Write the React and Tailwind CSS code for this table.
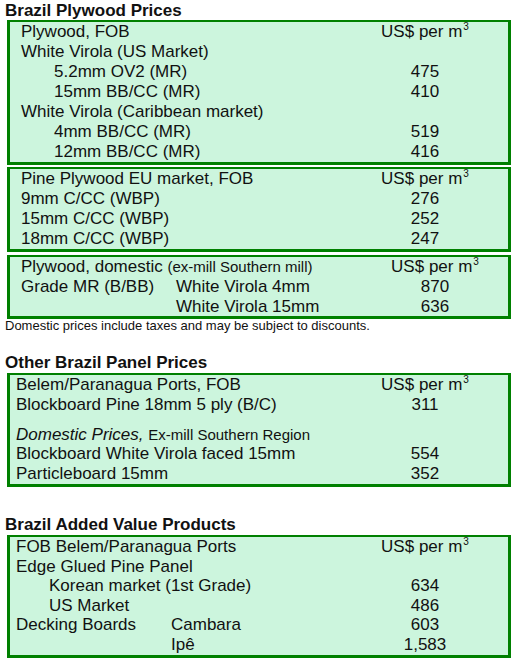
import React from "react";

const Box = ({ children, className = "" }) => (
  <div
    className={
      "ml-[7px] w-[504px] border-solid border-[#008000] border-l-[3px] border-r-[3px] border-t-2 border-b-[3px] bg-[#ccf5dd] " +
      className
    }
  >
    {children}
  </div>
);

const M3 = () => (
  <span>
    US$ per m<span className="relative -top-[7px] text-[10px] ml-[1px]">3</span>
  </span>
);

const Row = ({ left, right, pl = "pl-[11px]", h = "h-[20px] leading-[20px]", cols = "grid-cols-[1fr_166px]" }) => (
  <div className={"grid " + cols + " " + h}>
    <div className={"whitespace-nowrap " + pl}>{left}</div>
    <div className="text-center whitespace-nowrap">{right}</div>
  </div>
);

const Heading = ({ children, className = "" }) => (
  <div className={"pl-[5px] h-[20px] text-[17px] font-bold whitespace-nowrap " + className}>{children}</div>
);

export default function App() {
  return (
    <div className="w-[519px] h-[665px] bg-white text-[#111] text-[17px] font-['Liberation_Sans',Arial,sans-serif] overflow-hidden">
      <Heading className="leading-[22px]">Brazil Plywood Prices</Heading>

      <Box>
        <Row left="Plywood, FOB" right={<M3 />} />
        <Row left="White Virola (US Market)" right="" />
        <Row pl="pl-[44px]" left="5.2mm OV2 (MR)" right="475" />
        <Row pl="pl-[44px]" left="15mm BB/CC (MR)" right="410" />
        <Row left="White Virola (Caribbean market)" right="" />
        <Row pl="pl-[44px]" left="4mm BB/CC (MR)" right="519" />
        <Row pl="pl-[44px]" left="12mm BB/CC (MR)" right="416" />
      </Box>

      <Box className="mt-[2px]">
        <Row left="Pine Plywood EU market, FOB" right={<M3 />} />
        <Row left="9mm C/CC (WBP)" right="276" />
        <Row left="15mm C/CC (WBP)" right="252" />
        <Row left="18mm C/CC (WBP)" right="247" />
      </Box>

      <Box className="mt-[3px]">
        <Row
          cols="grid-cols-[1fr_146px]"
          left={
            <span>
              Plywood, domestic <span className="text-[15px]">(ex-mill Southern mill)</span>
            </span>
          }
          right={<M3 />}
        />
        <div className="grid grid-cols-[166px_1fr_146px] h-[20px] leading-[20px]">
          <div className="pl-[11px] whitespace-nowrap">Grade MR (B/BB)</div>
          <div className="whitespace-nowrap">White Virola 4mm</div>
          <div className="text-center">870</div>
        </div>
        <div className="grid grid-cols-[166px_1fr_146px] h-[19px] leading-[20px]">
          <div className="pl-[11px]"></div>
          <div className="whitespace-nowrap">White Virola 15mm</div>
          <div className="text-center">636</div>
        </div>
      </Box>

      <div className="pl-[5px] text-[13px] leading-[13px] whitespace-nowrap">
        Domestic prices include taxes and may be subject to discounts.
      </div>

      <Heading className="mt-[21px] leading-[20px]">Other Brazil Panel Prices</Heading>

      <Box>
        <Row pl="pl-[6px]" left="Belem/Paranagua Ports, FOB" right={<M3 />} />
        <Row pl="pl-[6px]" left="Blockboard Pine 18mm 5 ply (B/C)" right="311" />
        <div className="h-[10px]"></div>
        <Row
          pl="pl-[6px]"
          h="h-[19px] leading-[20px]"
          left={
            <span>
              <span className="italic">Domestic Prices,</span>{" "}
              <span className="text-[15px]">Ex-mill Southern Region</span>
            </span>
          }
          right=""
        />
        <Row pl="pl-[6px]" left="Blockboard White Virola faced 15mm" right="554" />
        <Row pl="pl-[6px]" left="Particleboard 15mm" right="352" />
      </Box>

      <Heading className="mt-[28px] leading-[20px]">Brazil Added Value Products</Heading>

      <Box>
        <Row pl="pl-[6px]" h="h-[19.6px] leading-[20px]" left="FOB Belem/Paranagua Ports" right={<M3 />} />
        <Row pl="pl-[6px]" h="h-[19.6px] leading-[20px]" left="Edge Glued Pine Panel" right="" />
        <Row pl="pl-[39px]" h="h-[19.6px] leading-[20px]" left="Korean market (1st Grade)" right="634" />
        <Row pl="pl-[39px]" h="h-[19.6px] leading-[20px]" left="US Market" right="486" />
        <div className="grid grid-cols-[161px_1fr_166px] h-[19.6px] leading-[20px]">
          <div className="pl-[6px] whitespace-nowrap">Decking Boards</div>
          <div className="whitespace-nowrap">Cambara</div>
          <div className="text-center">603</div>
        </div>
        <div className="grid grid-cols-[161px_1fr_166px] h-[19.6px] leading-[20px]">
          <div></div>
          <div className="whitespace-nowrap">Ipê</div>
          <div className="text-center">1,583</div>
        </div>
      </Box>
    </div>
  );
}
